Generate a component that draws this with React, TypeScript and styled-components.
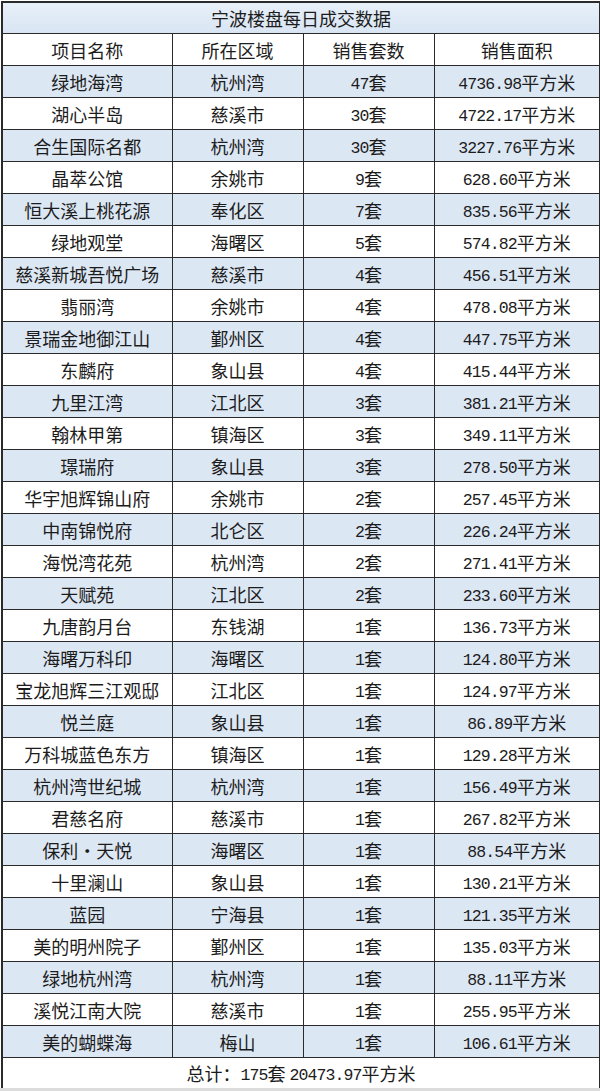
import React from 'react'
import styled, { createGlobalStyle } from 'styled-components'

const GlobalStyle = createGlobalStyle`
  html, body {
    margin: 0;
    padding: 0;
    background: #ffffff;
  }
`

type Row = [string, string, number, string]

const rows: Row[] = [
  ['绿地海湾', '杭州湾', 47, '4736.98'],
  ['湖心半岛', '慈溪市', 30, '4722.17'],
  ['合生国际名都', '杭州湾', 30, '3227.76'],
  ['晶萃公馆', '余姚市', 9, '628.60'],
  ['恒大溪上桃花源', '奉化区', 7, '835.56'],
  ['绿地观堂', '海曙区', 5, '574.82'],
  ['慈溪新城吾悦广场', '慈溪市', 4, '456.51'],
  ['翡丽湾', '余姚市', 4, '478.08'],
  ['景瑞金地御江山', '鄞州区', 4, '447.75'],
  ['东麟府', '象山县', 4, '415.44'],
  ['九里江湾', '江北区', 3, '381.21'],
  ['翰林甲第', '镇海区', 3, '349.11'],
  ['璟瑞府', '象山县', 3, '278.50'],
  ['华宇旭辉锦山府', '余姚市', 2, '257.45'],
  ['中南锦悦府', '北仑区', 2, '226.24'],
  ['海悦湾花苑', '杭州湾', 2, '271.41'],
  ['天赋苑', '江北区', 2, '233.60'],
  ['九唐韵月台', '东钱湖', 1, '136.73'],
  ['海曙万科印', '海曙区', 1, '124.80'],
  ['宝龙旭辉三江观邸', '江北区', 1, '124.97'],
  ['悦兰庭', '象山县', 1, '86.89'],
  ['万科城蓝色东方', '镇海区', 1, '129.28'],
  ['杭州湾世纪城', '杭州湾', 1, '156.49'],
  ['君慈名府', '慈溪市', 1, '267.82'],
  ['保利・天悦', '海曙区', 1, '88.54'],
  ['十里澜山', '象山县', 1, '130.21'],
  ['蓝园', '宁海县', 1, '121.35'],
  ['美的明州院子', '鄞州区', 1, '135.03'],
  ['绿地杭州湾', '杭州湾', 1, '88.11'],
  ['溪悦江南大院', '慈溪市', 1, '255.95'],
  ['美的蝴蝶海', '梅山', 1, '106.61'],
]

const Page = styled.div`
  width: 600px;
  height: 1091px;
  padding: 1px 0 0 1px;
  box-sizing: border-box;
  background: #ffffff;
  overflow: hidden;
  position: relative;
`

const Table = styled.table`
  width: 598px;
  border-collapse: collapse;
  table-layout: fixed;
  font-family: "Noto Sans CJK SC", "Liberation Sans", sans-serif;
  font-size: 18px;
  line-height: 20px;
  color: #1c1c1c;
  border: 2px solid #2a2a2a;
`

const TitleCell = styled.td`
  height: 30px;
  padding: 0;
  text-align: center;
  vertical-align: middle;
  background: linear-gradient(#e8f0f9, #d9e5f3);
  border-bottom: 1px solid #2a2a2a;
`

const Tr = styled.tr<{ $shade?: boolean }>`
  background: ${p => (p.$shade ? '#dce7f4' : '#ffffff')};
`

const Cell = styled.td`
  height: 31px;
  padding: 0;
  text-align: center;
  vertical-align: middle;
  white-space: nowrap;
  border: 1px solid #2a2a2a;
`

const TotalCell = styled.td`
  height: 30px;
  padding: 0;
  text-align: center;
  vertical-align: middle;
  white-space: pre;
  background: #ffffff;
  border: 1px solid #2a2a2a;
`

const BottomShade = styled.div`
  position: absolute;
  left: 0;
  right: 0;
  bottom: 0;
  height: 3px;
  background: #dcdcdc;
`

const Num = styled.span`
  font-family: "Liberation Mono", monospace;
  font-size: 16.5px;
  letter-spacing: -0.9px;
  line-height: 15px;
  vertical-align: 1px;
`

// digits are half-width, like the 宋体 in the picture
function Mixed({ text }: { text: string }) {
  const parts = text.split(/([0-9.]+)/)
  return (
    <>
      {parts.map((p, i) => (/^[0-9.]+$/.test(p) ? <Num key={i}>{p}</Num> : p))}
    </>
  )
}

export default function App() {
  return (
    <Page>
      <GlobalStyle />
      <Table>
        <colgroup>
          <col style={{ width: 170 }} />
          <col style={{ width: 131 }} />
          <col style={{ width: 131 }} />
          <col style={{ width: 166 }} />
        </colgroup>
        <tbody>
          <tr>
            <TitleCell colSpan={4}>宁波楼盘每日成交数据</TitleCell>
          </tr>
          <Tr>
            <Cell>项目名称</Cell>
            <Cell>所在区域</Cell>
            <Cell>销售套数</Cell>
            <Cell>销售面积</Cell>
          </Tr>
          {rows.map((r, i) => (
            <Tr key={r[0]} $shade={i % 2 === 0}>
              <Cell>{r[0]}</Cell>
              <Cell>{r[1]}</Cell>
              <Cell>
                <Mixed text={`${r[2]}套`} />
              </Cell>
              <Cell>
                <Mixed text={`${r[3]}平方米`} />
              </Cell>
            </Tr>
          ))}
          <tr>
            <TotalCell colSpan={4}>
              <Mixed text="总计：175套 20473.97平方米" />
            </TotalCell>
          </tr>
        </tbody>
      </Table>
      <BottomShade />
    </Page>
  )
}
